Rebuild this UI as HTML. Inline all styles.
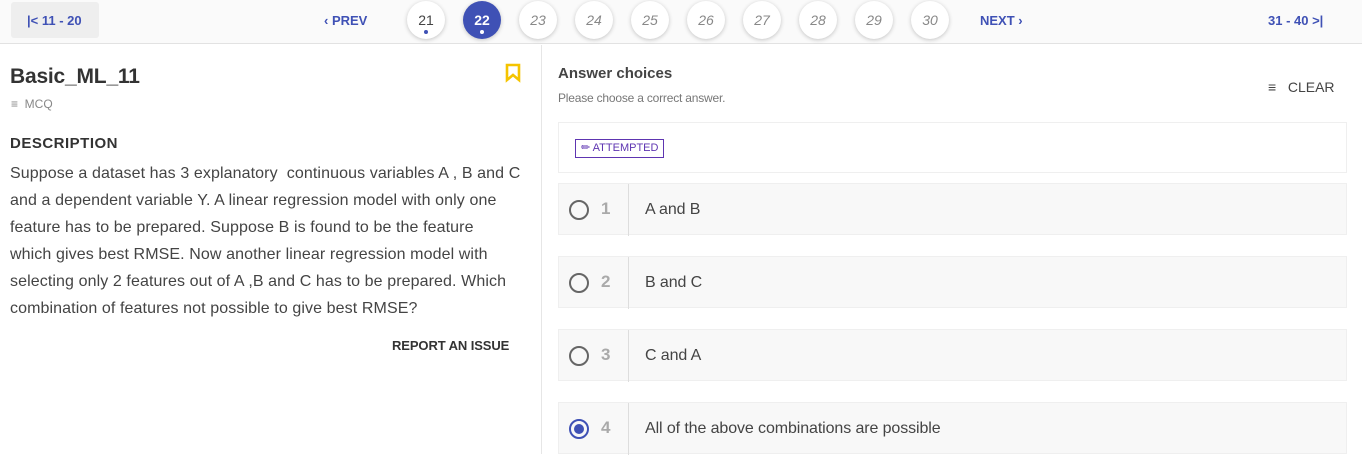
<!DOCTYPE html>
<html><head><meta charset="utf-8"><style>
*{margin:0;padding:0;box-sizing:border-box}
body{width:1362px;height:454px;overflow:hidden;background:#fff;font-family:"Liberation Sans",sans-serif;color:#444;position:relative}
.a{position:absolute;white-space:nowrap}
.hdr{position:absolute;left:0;top:0;width:1362px;height:44px;background:#fafafa;border-bottom:1px solid #e2e2e2}
.blue{color:#3f51b5}
.c{position:absolute;top:1px;width:38px;height:38px;border-radius:50%;background:#fff;box-shadow:0 1px 4px rgba(0,0,0,.22);font-size:14px;font-style:italic;color:#888;text-align:center;line-height:38px}
.opt{position:absolute;left:558px;width:789px;height:52px;background:#f8f8f8;border:1px solid #efefef}
.opt .r{position:absolute;left:10px;top:16px;width:20px;height:20px;border:2px solid #666;border-radius:50%}
.opt .n{position:absolute;left:42px;top:15px;font-size:17px;font-weight:bold;color:#aaa}
.opt .d{position:absolute;left:69px;top:0px;width:1px;height:52px;background:#ddd}
.opt .t{position:absolute;left:86px;top:17px;font-size:16px;color:#444;letter-spacing:-.1px}
</style></head><body>
<div class="hdr"></div>
<div class="a" style="left:11px;top:2px;width:88px;height:36px;background:#eeeeee;border-radius:3px"></div>
<div class="a blue" style="left:27px;top:13px;font-size:13px;font-weight:bold">|&lt; 11 - 20</div>
<div class="a blue" style="left:324px;top:13px;font-size:13px;font-weight:bold">&lsaquo; PREV</div>
<div class="c" style="left:407px;font-style:normal;color:#444">21<div style="position:absolute;left:17px;top:29px;width:4px;height:4px;border-radius:50%;background:#3f51b5"></div></div>
<div class="c" style="left:463px;background:#3f51b5;color:#fff;font-style:normal;font-weight:bold">22<div style="position:absolute;left:17px;top:29px;width:4px;height:4px;border-radius:50%;background:#fff"></div></div>
<div class="c" style="left:519px">23</div>
<div class="c" style="left:575px">24</div>
<div class="c" style="left:631px">25</div>
<div class="c" style="left:687px">26</div>
<div class="c" style="left:743px">27</div>
<div class="c" style="left:799px">28</div>
<div class="c" style="left:855px">29</div>
<div class="c" style="left:911px">30</div>
<div class="a blue" style="left:980px;top:13px;font-size:13px;font-weight:bold">NEXT &rsaquo;</div>
<div class="a blue" style="left:1268px;top:13px;font-size:13px;font-weight:bold">31 - 40 &gt;|</div>

<div class="a" style="left:541px;top:45px;width:1px;height:409px;background:#e6e6e6"></div>

<div class="a" style="left:10px;top:65px;font-size:21px;font-weight:bold;color:#333;letter-spacing:-.2px">Basic_ML_11</div>
<svg class="a" style="left:505px;top:63px" width="16" height="20" viewBox="0 0 16 20"><path d="M2 2H14V17L8 12L2 17Z" fill="none" stroke="#f5c400" stroke-width="2.6"/></svg>
<div class="a" style="left:11px;top:97px;font-size:12px;color:#888">&#8801;&nbsp; MCQ</div>
<div class="a" style="left:10px;top:135px;font-size:15px;font-weight:bold;color:#333;letter-spacing:.5px">DESCRIPTION</div>
<div class="a" style="left:10px;top:160px;font-size:16px;line-height:27px;letter-spacing:.1px;color:#444">Suppose a dataset has 3 explanatory&nbsp; continuous variables A , B and C<br>and a dependent variable Y. A linear regression model with only one<br>feature has to be prepared. Suppose B is found to be the feature<br>which gives best RMSE. Now another linear regression model with<br>selecting only 2 features out of A ,B and C has to be prepared. Which<br>combination of features not possible to give best RMSE?</div>
<div class="a" style="left:392px;top:338px;font-size:13px;font-weight:bold;color:#333;letter-spacing:-.1px">REPORT AN ISSUE</div>

<div class="a" style="left:558px;top:65px;font-size:15px;font-weight:bold;color:#444">Answer choices</div>
<div class="a" style="left:558px;top:91px;font-size:12px;color:#777;letter-spacing:-.2px">Please choose a correct answer.</div>
<div class="a" style="left:1268px;top:79px;font-size:14px;color:#444"><b>&#8801;</b>&nbsp;&nbsp; CLEAR</div>
<div class="a" style="left:558px;top:122px;width:789px;height:51px;border:1px solid #efefef"></div>
<div class="a" style="left:575px;top:139px;height:19px;border:1px solid #5e35b1;color:#5e35b1;font-size:11px;line-height:17px;padding:0 5px">&#9999; ATTEMPTED</div>

<div class="opt" style="top:183px"><div class="r"></div><div class="n">1</div><div class="d"></div><div class="t">A and B</div></div>
<div class="opt" style="top:256px"><div class="r"></div><div class="n">2</div><div class="d"></div><div class="t">B and C</div></div>
<div class="opt" style="top:329px"><div class="r"></div><div class="n">3</div><div class="d"></div><div class="t">C and A</div></div>
<div class="opt" style="top:402px"><div class="r" style="border-color:#3f51b5"><div style="position:absolute;left:3px;top:3px;width:10px;height:10px;border-radius:50%;background:#3f51b5"></div></div><div class="n">4</div><div class="d"></div><div class="t">All of the above combinations are possible</div></div>
</body></html>
